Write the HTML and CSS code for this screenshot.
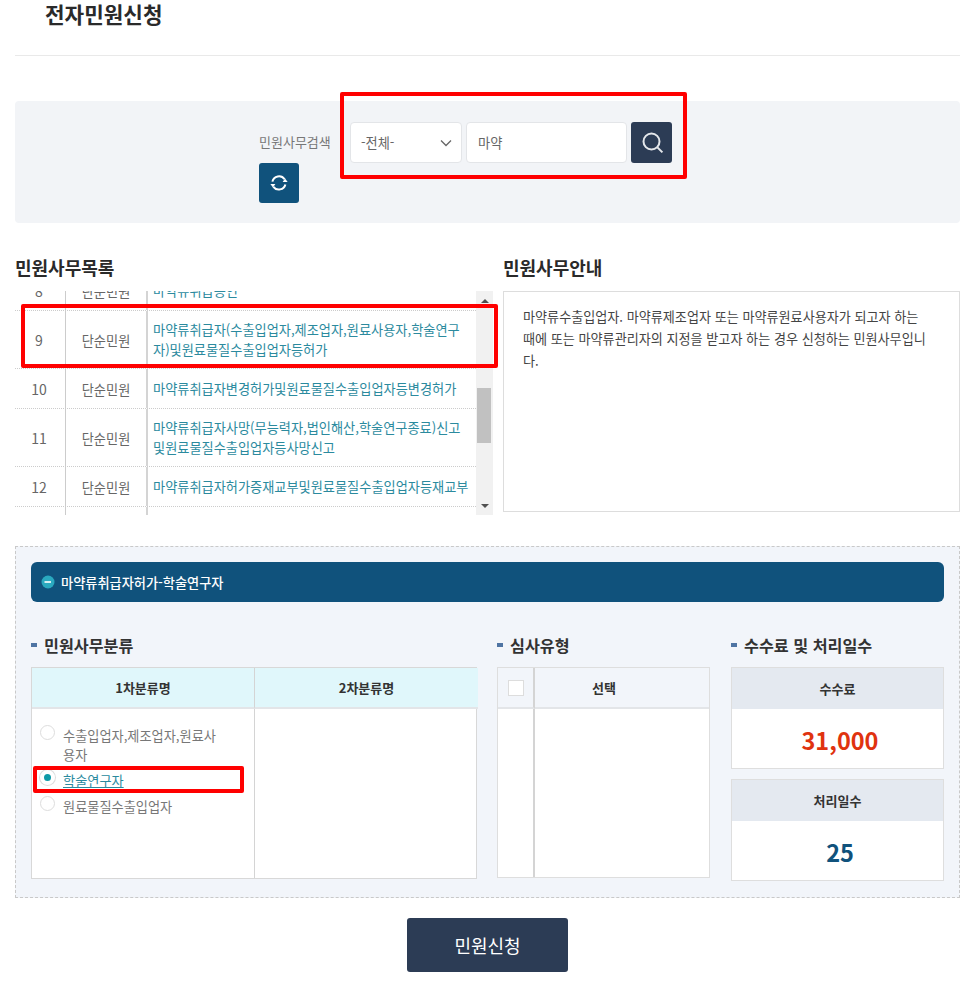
FILE: index.html
```html
<!DOCTYPE html>
<html lang="ko">
<head>
    <meta charset="UTF-8">
    <meta name="viewport" content="width=device-width, initial-scale=1.0">
    <title>전자민원신청</title>
    <link rel="stylesheet" href="styles.css">
</head>
<body>
    <div class="page">
        <!-- 제목 -->
        <h1 class="page-title">전자민원신청</h1>

        <!-- 검색 -->
        <div class="search-box">
            <div class="search-left">
                <span class="search-label">민원사무검색</span>
                <button class="refresh-btn" type="button" aria-label="초기화">
                    <svg width="20" height="20" viewBox="0 0 20 20" fill="none">
                        <path d="M3.4 8.6A6.8 6.8 0 0 1 15.6 6.2" stroke="#fff" stroke-width="2"/>
                        <path d="M16.4 11.4A6.8 6.8 0 0 1 4.4 13.8" stroke="#fff" stroke-width="2"/>
                        <path d="M13.6 9h5l-2.5-3.4z" fill="#fff"/>
                        <path d="M6.4 11h-5l2.5 3.4z" fill="#fff"/>
                    </svg>
                </button>
            </div>
            <div class="search-form">
                <div class="select-box">
                    <span>-전체-</span>
                    <svg width="12" height="8" viewBox="0 0 12 8" fill="none">
                        <path d="M1 1.5l5 5 5-5" stroke="#666" stroke-width="1.3"/>
                    </svg>
                </div>
                <div class="input-box">마약</div>
                <button class="search-btn" type="button" aria-label="검색">
                    <svg width="24" height="24" viewBox="0 0 24 24" fill="none">
                        <circle cx="11.5" cy="10.5" r="8" stroke="#e4e7eb" stroke-width="2"/>
                        <path d="M17.4 16.4l5 5" stroke="#e4e7eb" stroke-width="2"/>
                    </svg>
                </button>
            </div>
        </div>

        <!-- 목록 / 안내 -->
        <div class="list-row">
            <div class="list-col">
                <h2 class="sec-title">민원사무목록</h2>
                <div class="list-wrap">
                    <div class="list-body">
                        <div class="item item-cut">
                            <span class="no">8</span><span class="kind">단순민원</span><a class="name">마약류취급승인</a>
                        </div>
                        <div class="item item-two">
                            <span class="no">9</span><span class="kind">단순민원</span><a class="name">마약류취급자(수출입업자,제조업자,원료사용자,학술연구자)및원료물질수출입업자등허가</a>
                        </div>
                        <div class="item">
                            <span class="no">10</span><span class="kind">단순민원</span><a class="name">마약류취급자변경허가및원료물질수출입업자등변경허가</a>
                        </div>
                        <div class="item item-two">
                            <span class="no">11</span><span class="kind">단순민원</span><a class="name">마약류취급자사망(무능력자,법인해산,학술연구종료)신고<br>및원료물질수출입업자등사망신고</a>
                        </div>
                        <div class="item">
                            <span class="no">12</span><span class="kind">단순민원</span><a class="name">마약류취급자허가증재교부및원료물질수출입업자등재교부</a>
                        </div>
                        <div class="item item-end">
                            <span class="no"></span><span class="kind"></span><a class="name"></a>
                        </div>
                    </div>
                    <div class="scrollbar">
                        <span class="arrow-up"></span>
                        <span class="thumb"></span>
                        <span class="arrow-down"></span>
                    </div>
                </div>
            </div>
            <div class="info-col">
                <h2 class="sec-title">민원사무안내</h2>
                <div class="info-box">마약류수출입업자. 마약류제조업자 또는 마약류원료사용자가 되고자 하는 때에 또는 마약류관리자의 지정을 받고자 하는 경우 신청하는 민원사무입니다.</div>
            </div>
        </div>

        <!-- 선택 내용 -->
        <div class="detail">
            <div class="detail-bar">
                <svg width="14" height="14" viewBox="0 0 14 14">
                    <circle cx="7" cy="7" r="6.5" fill="#2aa9bf"/>
                    <path d="M3.5 7h6.5" stroke="#fff" stroke-width="1.6" fill="none"/>
                </svg>
                <span>마약류취급자허가-학술연구자</span>
            </div>
            <div class="detail-cols">
                <div class="col-class">
                    <h3 class="sub-title">민원사무분류</h3>
                    <div class="class-table">
                        <div class="class-head">1차분류명</div>
                        <div class="class-head">2차분류명</div>
                        <div class="class-cell">
                            <label class="radio-row"><i class="radio"></i><span>수출입업자,제조업자,원료사용자</span></label>
                            <label class="radio-row radio-on"><i class="radio"></i><span>학술연구자</span></label>
                            <label class="radio-row"><i class="radio"></i><span>원료물질수출입업자</span></label>
                        </div>
                        <div class="class-cell"></div>
                    </div>
                </div>
                <div class="col-type">
                    <h3 class="sub-title">심사유형</h3>
                    <div class="type-table">
                        <div class="type-check"><i class="checkbox"></i></div>
                        <div class="type-head">선택</div>
                        <div class="type-cell"></div>
                        <div class="type-cell"></div>
                    </div>
                </div>
                <div class="col-fee">
                    <h3 class="sub-title">수수료 및 처리일수</h3>
                    <div class="fee-card">
                        <div class="fee-head">수수료</div>
                        <div class="fee-value fee-red">31,000</div>
                    </div>
                    <div class="fee-card fee-card-days">
                        <div class="fee-head">처리일수</div>
                        <div class="fee-value fee-blue">25</div>
                    </div>
                </div>
            </div>
        </div>

        <div class="submit-row">
            <button class="submit-btn" type="button">민원신청</button>
        </div>
    </div>

    <!-- 빨간 표시 -->
    <div class="mark mark-search"></div>
    <div class="mark mark-row"></div>
    <div class="mark mark-radio"></div>
</body>
</html>
```

FILE: styles.css
```css
* {
    box-sizing: border-box;
}

body {
    margin: 0;
    font-family: "Noto Sans CJK KR", "Noto Sans", sans-serif;
    background-color: #fff;
    color: #333;
    overflow: hidden;
}

.page {
    position: relative;
    width: 980px;
    height: 987px;
    padding: 0 20px 0 15px;
}

/* 제목 */
.page-title {
    height: 56px;
    margin: 0;
    padding: 2px 0 0 30px;
    font-size: 21.3px;
    font-weight: 700;
    line-height: 24px;
    color: #2a2a2a;
    border-bottom: 1px solid #e9e9e9;
}

/* 검색 */
.search-box {
    display: flex;
    align-items: flex-start;
    height: 122px;
    margin-top: 45px;
    padding: 21px 0 0 244px;
    background-color: #f2f4f7;
    border-radius: 4px;
}

.search-left {
    width: 91px;
}

.search-label {
    display: block;
    height: 41px;
    padding-top: 10px;
    font-size: 13px;
    line-height: 20px;
    color: #777;
    white-space: nowrap;
}

.refresh-btn,
.search-btn {
    display: flex;
    align-items: center;
    justify-content: center;
    height: 41px;
    padding: 0;
    border: 0;
    border-radius: 3px;
}

.refresh-btn {
    width: 40px;
    height: 40px;
    background-color: #10527c;
}

.search-btn {
    width: 41px;
    background-color: #2c3c55;
}

.search-form {
    display: flex;
    gap: 4px;
}

.select-box,
.input-box {
    display: flex;
    align-items: center;
    height: 41px;
    background-color: #fff;
    border: 1px solid #e3e5e8;
    border-radius: 4px;
    font-size: 13.2px;
    color: #666;
}

.select-box {
    justify-content: space-between;
    width: 112px;
    padding: 0 9px 0 10px;
}

.input-box {
    width: 161px;
    padding-left: 11px;
}

/* 목록 / 안내 */
.list-row {
    display: flex;
    gap: 10px;
    margin-top: 30px;
}

.list-col {
    width: 478px;
}

.info-col {
    width: 457px;
}

.sec-title {
    height: 38px;
    margin: 0;
    font-size: 18px;
    font-weight: 700;
    line-height: 28px;
    color: #2a2a2a;
}

.list-wrap {
    display: flex;
    height: 224px;
}

.list-body {
    width: 461px;
    overflow: hidden;
}

.item {
    display: grid;
    grid-template-columns: 51px 82px 1fr;
    align-items: stretch;
    height: 40px;
    border-bottom: 1px dotted #ccc;
    font-size: 13.2px;
    color: #666;
}

.item-two {
    height: 58px;
}

.item-cut {
    height: 40px;
    margin-top: -20px;
}

.item-end {
    border-bottom: 0;
}

.no,
.kind {
    display: flex;
    align-items: center;
    justify-content: center;
    padding-top: 1px;
    border-right: 1px solid #ccc;
}

.no {
    padding-right: 2px;
    font-size: 14px;
}

.kind {
    border-right: 2px solid #d4d4d4;
}

.name {
    align-self: center;
    padding: 0 5px 0 5px;
    line-height: 20px;
    color: #2b8a9e;
}

.scrollbar {
    display: flex;
    flex-direction: column;
    justify-content: space-between;
    position: relative;
    width: 17px;
    padding: 8px 0 7px;
    background-color: #f1f1f1;
}

.arrow-up,
.arrow-down {
    align-self: center;
    width: 0;
    height: 0;
    border-left: 4px solid transparent;
    border-right: 4px solid transparent;
}

.arrow-up {
    border-bottom: 4px solid #505050;
}

.arrow-down {
    border-top: 4px solid #505050;
}

.thumb {
    position: absolute;
    top: 97px;
    left: 1px;
    width: 14px;
    height: 55px;
    background-color: #c1c1c1;
}

.info-box {
    height: 221px;
    padding: 14px 26px 14px 19px;
    background-color: #fff;
    border: 1px solid #ddd;
    font-size: 13.1px;
    line-height: 22px;
    color: #444;
}

/* 선택 내용 */
.detail {
    height: 352px;
    margin-top: 31px;
    padding: 15px 15px 0;
    background-color: #f2f5fa;
    border: 1px dashed #c9c9c9;
}

.detail-bar {
    display: flex;
    align-items: center;
    gap: 6px;
    height: 40px;
    padding-left: 10px;
    background-color: #10527c;
    border-radius: 6px;
    font-size: 13.2px;
    font-weight: 500;
    color: #fff;
}

.detail-cols {
    display: flex;
    margin-top: 30px;
}

.col-class {
    width: 446px;
}

.col-type {
    width: 213px;
    margin-left: 20px;
}

.col-fee {
    width: 213px;
    margin-left: 21px;
}

.sub-title {
    display: flex;
    align-items: center;
    gap: 7px;
    height: 35px;
    margin: 0;
    padding-bottom: 10px;
    font-size: 16.2px;
    font-weight: 700;
    color: #333;
}

.sub-title::before {
    content: "";
    width: 6px;
    height: 4px;
    background-color: #4f74a3;
}

/* 1차 / 2차 분류 */
.class-table {
    display: grid;
    grid-template-columns: 223px 223px;
    grid-template-rows: 41px 169px;
    border: 1px solid #d8d8d8;
    background-color: #fff;
}

.class-head {
    display: flex;
    align-items: center;
    justify-content: center;
    background-color: #e0f7fb;
    border-bottom: 2px solid #e3e5e8;
    font-size: 13px;
    font-weight: 700;
}

.class-head:first-child,
.class-cell:nth-child(3) {
    border-right: 1px solid #d4d4d4;
}

.class-cell {
    display: flex;
    flex-direction: column;
    gap: 7px;
    padding: 17px 30px 0 8px;
}

.radio-row {
    display: flex;
    gap: 8px;
    font-size: 13.2px;
    line-height: 19px;
    color: #777;
}

.radio {
    flex: none;
    width: 15px;
    height: 15px;
    margin-top: -1px;
    background-color: #fff;
    border: 1px solid #ddd;
    border-radius: 50%;
}

.radio-on {
    color: #2b8a9e;
}

.radio-on span {
    text-decoration: underline;
}

.radio-on .radio {
    border-width: 4px;
    border-color: #fff;
    background-color: #0e9aa7;
    box-shadow: 0 0 0 1px #ddd;
}

/* 심사유형 */
.type-table {
    display: grid;
    grid-template-columns: 37px 1fr;
    grid-template-rows: 41px 168px;
    height: 211px;
    border: 1px solid #dedede;
    background-color: #fff;
}

.type-check,
.type-head {
    display: flex;
    align-items: center;
    justify-content: center;
    background-color: #f2f5fa;
    border-bottom: 2px solid #e3e5e8;
}

.type-check,
.type-cell:nth-child(3) {
    border-right: 2px solid #d4d4d4;
}

.type-head {
    padding-right: 36px;
    font-size: 13px;
    font-weight: 700;
}

.checkbox {
    width: 16px;
    height: 16px;
    background-color: #fff;
    border: 1px solid #ddd;
}

/* 수수료 */
.fee-card {
    border: 1px solid #dedede;
    background-color: #fff;
}

.fee-card-days {
    margin-top: 10px;
}

.fee-head {
    display: flex;
    align-items: center;
    justify-content: center;
    height: 41px;
    background-color: #e4e9f0;
    font-size: 13px;
    font-weight: 700;
}

.fee-value {
    display: flex;
    align-items: center;
    justify-content: center;
    height: 59px;
    padding: 2px 0 0 5px;
    font-size: 23.5px;
    font-weight: 700;
}

.fee-red {
    color: #e0330f;
}

.fee-blue {
    color: #10527c;
}

/* 버튼 */
.submit-row {
    display: flex;
    justify-content: center;
    margin-top: 20px;
}

.submit-btn {
    width: 161px;
    height: 54px;
    background-color: #2c3c55;
    border: 0;
    border-radius: 3px;
    font-family: inherit;
    font-size: 18px;
    color: #fff;
}

/* 빨간 표시 */
.mark {
    position: absolute;
    border: 4px solid #f00;
    border-radius: 2px;
}

.mark-search {
    left: 340px;
    top: 92px;
    width: 347px;
    height: 87px;
}

.mark-row {
    left: 21px;
    top: 304px;
    width: 477px;
    height: 64px;
}

.mark-radio {
    left: 33px;
    top: 766px;
    width: 211px;
    height: 27px;
}
```
